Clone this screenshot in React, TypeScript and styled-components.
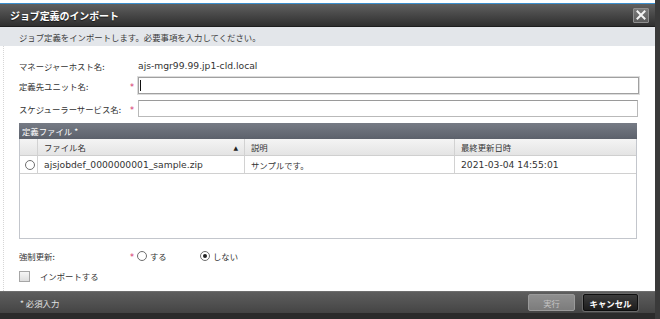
import React, { FC } from 'react';
import styled, { createGlobalStyle, css } from 'styled-components';

const JP = `'Noto Sans CJK JP', 'DejaVu Sans', sans-serif`;
const LATIN = `'DejaVu Sans', 'Noto Sans CJK JP', sans-serif`;

const GlobalStyle = createGlobalStyle`
  html, body {
    margin: 0;
    padding: 0;
    background: #ffffff;
  }
  body {
    font-family: ${JP};
    font-size: 8.4px;
    color: #333;
  }
`;

interface FileRow {
  name: string;
  description: string;
  updated: string;
}

const FILES: FileRow[] = [
  {
    name: 'ajsjobdef_0000000001_sample.zip',
    description: 'サンプルです。',
    updated: '2021-03-04 14:55:01',
  },
];

const App: FC = () => {
  return (
    <>
      <GlobalStyle />
      <Frame>
        <TitleBar>
          <Title>ジョブ定義のインポート</Title>
          <CloseButton aria-label="close">
            <svg width="10" height="10" viewBox="0 0 10 10">
              <path d="M1.5 1.5 L8.5 8.5 M8.5 1.5 L1.5 8.5" stroke="#f4f4f4" strokeWidth="2" strokeLinecap="square" />
            </svg>
          </CloseButton>
        </TitleBar>

        <SubHeader>ジョブ定義をインポートします。必要事項を入力してください。</SubHeader>

        <Body>
          <FormRow $mt={11}>
            <Label>マネージャーホスト名:</Label>
            <span />
            <Latin>ajs-mgr99.99.jp1-cld.local</Latin>
          </FormRow>

          <FormRow $mt={3}>
            <Label>定義先ユニット名:</Label>
            <Required>*</Required>
            <TextInput $focused>
              <Caret />
            </TextInput>
          </FormRow>

          <FormRow $mt={6}>
            <Label>スケジューラーサービス名:</Label>
            <Required>*</Required>
            <TextInput />
          </FormRow>

          <TablePanel>
            <PanelHeader>定義ファイル *</PanelHeader>
            <Grid>
              <HeadCell />
              <HeadCell $pad>
                ファイル名
                <SortArrow>▲</SortArrow>
              </HeadCell>
              <HeadCell $pad>説明</HeadCell>
              <HeadCell $pad $last>最終更新日時</HeadCell>

              {FILES.map(f => (
                <React.Fragment key={f.name}>
                  <DataCell>
                    <Radio />
                  </DataCell>
                  <DataCell $pad>
                    <Latin>{f.name}</Latin>
                  </DataCell>
                  <DataCell $pad>{f.description}</DataCell>
                  <DataCell $pad $last>
                    <Latin>{f.updated}</Latin>
                  </DataCell>
                </React.Fragment>
              ))}
            </Grid>
          </TablePanel>

          <FormRow $mt={8}>
            <Label>強制更新:</Label>
            <Required>*</Required>
            <RadioGroup>
              <Option>
                <Radio />
                する
              </Option>
              <Option>
                <Radio $checked />
                しない
              </Option>
            </RadioGroup>
          </FormRow>

          <CheckRow>
            <Checkbox />
            インポートする
          </CheckRow>
        </Body>

        <Footer>
          <FooterNote>* 必須入力</FooterNote>
          <Buttons>
            <FooterButton disabled>実行</FooterButton>
            <FooterButton $primary>キャンセル</FooterButton>
          </Buttons>
        </Footer>
        <BottomStrip />
      </Frame>
    </>
  );
};

export default App;

const Frame = styled.div`
  width: 660px;
  height: 319px;
  box-sizing: border-box;
  padding-top: 3px;
  border-right: 5px solid #3a3a3a;
  display: flex;
  flex-direction: column;
  background: #fff;
`;

const TitleBar = styled.div`
  height: 24px;
  box-sizing: border-box;
  border-top: 1px solid #3b8fce;
  border-bottom: 1px solid #1e1e1e;
  background: linear-gradient(to bottom, #606060 0%, #474747 50%, #2f2f2f 100%);
  display: flex;
  align-items: center;
  justify-content: space-between;
  padding: 0 6px 0 10px;
`;

const Title = styled.div`
  color: #fff;
  font-size: 10px;
  font-weight: bold;
  letter-spacing: -0.1px;
  text-shadow: 0 1px 1px rgba(0, 0, 0, 0.6);
`;

const CloseButton = styled.div`
  width: 16px;
  height: 15px;
  box-sizing: border-box;
  border: 1px solid #8e8e8e;
  border-radius: 1px;
  background: linear-gradient(to bottom, #7a7a7a, #5c5c5c);
  display: flex;
  align-items: center;
  justify-content: center;
`;

const SubHeader = styled.div`
  height: 19px;
  background: #e3e6ea;
  padding-left: 19px;
  display: flex;
  align-items: center;
  color: #3a3a3a;
`;

const Body = styled.div`
  flex: 1;
  margin-left: 3px;
  border-left: 1px dotted #d6d6d6;
  padding: 0 17px 0 15px;
  display: flex;
  flex-direction: column;
`;

const FormRow = styled.div<{ $mt: number }>`
  margin-top: ${p => p.$mt}px;
  height: 17px;
  display: grid;
  grid-template-columns: 112px 7px 1fr;
  align-items: center;
`;

const Label = styled.span`
  color: #333;
  white-space: nowrap;
`;

const Latin = styled.span`
  font-family: ${LATIN};
  font-size: 9.2px;
  color: #333;
`;

const Required = styled.span`
  color: #d4306a;
  font-size: 8px;
  font-family: ${LATIN};
  line-height: 1;
  padding-top: 5px;
  margin-left: -1px;
`;

const TextInput = styled.div<{ $focused?: boolean }>`
  height: 17px;
  box-sizing: border-box;
  background: #fff;
  position: relative;
  border: 1px solid #b9b9b9;
  border-top-color: #9a9a9a;
  ${p =>
    p.$focused &&
    css`
      border-color: #a0a0a0;
      box-shadow: 0 0 0 1px #dcdcdc;
      margin-right: -1px;
    `}
`;

const Caret = styled.span`
  position: absolute;
  left: 1px;
  top: 2px;
  width: 1px;
  height: 11px;
  background: #111;
`;

const TablePanel = styled.div`
  margin-top: 6px;
  height: 116px;
  box-sizing: border-box;
  border: 1px solid #c3c6cc;
  border-top: none;
  margin-right: 1px;
  display: flex;
  flex-direction: column;
`;

const PanelHeader = styled.div`
  height: 16px;
  background: linear-gradient(to bottom, #767b85, #5c616b);
  color: #fff;
  padding-left: 3px;
  display: flex;
  align-items: center;
  margin: 0 -1px;
`;

const Grid = styled.div`
  display: grid;
  grid-template-columns: 18px 207px 210px 1fr;
  grid-auto-rows: min-content;
`;

const HeadCell = styled.div<{ $pad?: boolean; $last?: boolean }>`
  height: 17px;
  box-sizing: border-box;
  background: linear-gradient(to bottom, #f4f4f4, #e4e4e4);
  border-bottom: 1px solid #cfcfcf;
  border-right: ${p => (p.$last ? 'none' : '1px solid #d2d2d2')};
  display: flex;
  align-items: center;
  justify-content: space-between;
  padding-left: ${p => (p.$pad ? '6px' : '0')};
  color: #333;
`;

const SortArrow = styled.span`
  font-size: 6px;
  color: #222;
  margin-right: 6px;
  font-family: ${LATIN};
`;

const DataCell = styled.div<{ $pad?: boolean; $last?: boolean }>`
  height: 18px;
  box-sizing: border-box;
  border-bottom: 1px solid #d0d0d0;
  border-right: ${p => (p.$last ? 'none' : '1px solid #d2d2d2')};
  display: flex;
  align-items: center;
  justify-content: ${p => (p.$pad ? 'flex-start' : 'center')};
  padding-left: ${p => (p.$pad ? '6px' : '2px')};
  color: #333;
`;

const Radio = styled.span<{ $checked?: boolean }>`
  width: 10px;
  height: 10px;
  box-sizing: border-box;
  border-radius: 50%;
  border: 1px solid #6e6e6e;
  background: #fff;
  display: inline-flex;
  align-items: center;
  justify-content: center;
  flex-shrink: 0;

  ${p =>
    p.$checked &&
    css`
      &::after {
        content: '';
        width: 4px;
        height: 4px;
        border-radius: 50%;
        background: #222;
      }
    `}
`;

const RadioGroup = styled.div`
  display: flex;
  align-items: center;
  margin-left: -1px;
`;

const Option = styled.label`
  width: 63px;
  display: flex;
  align-items: center;
  gap: 3px;
  color: #333;
`;

const CheckRow = styled.div`
  margin-top: 4px;
  height: 16px;
  display: flex;
  align-items: center;
  gap: 10px;
  color: #333;
`;

const Checkbox = styled.span`
  width: 11px;
  height: 11px;
  box-sizing: border-box;
  border: 1px solid #a6a6a6;
  background: linear-gradient(to bottom, #f6f6f6, #dedede);
`;

const Footer = styled.div`
  height: 22px;
  box-sizing: border-box;
  border-top: 1px solid #6e6e6e;
  background: linear-gradient(to bottom, #5e5e5e, #444);
  display: flex;
  align-items: center;
  justify-content: space-between;
  padding: 0 17px 0 20px;
`;

const FooterNote = styled.span`
  color: #e2e2e2;
`;

const Buttons = styled.div`
  display: flex;
  gap: 8px;
`;

const FooterButton = styled.button<{ $primary?: boolean }>`
  height: 17px;
  box-sizing: border-box;
  font-family: ${JP};
  font-size: 8.4px;
  padding: 0;
  border-radius: 2px;
  display: flex;
  align-items: center;
  justify-content: center;
  ${p =>
    p.$primary
      ? css`
          width: 55px;
          color: #fff;
          font-weight: bold;
          border: 1px solid #0e0e0e;
          box-shadow: 0 0 0 1px #6a6a6a;
          background: linear-gradient(to bottom, #3c3c3c, #1c1c1c);
        `
      : css`
          width: 47px;
          color: #c4c4c4;
          border: 1px solid #9a9a9a;
          background: linear-gradient(to bottom, #8f8f8f, #7c7c7c);
        `}
`;

const BottomStrip = styled.div`
  height: 6px;
  background: #2b2b2b;
`;
